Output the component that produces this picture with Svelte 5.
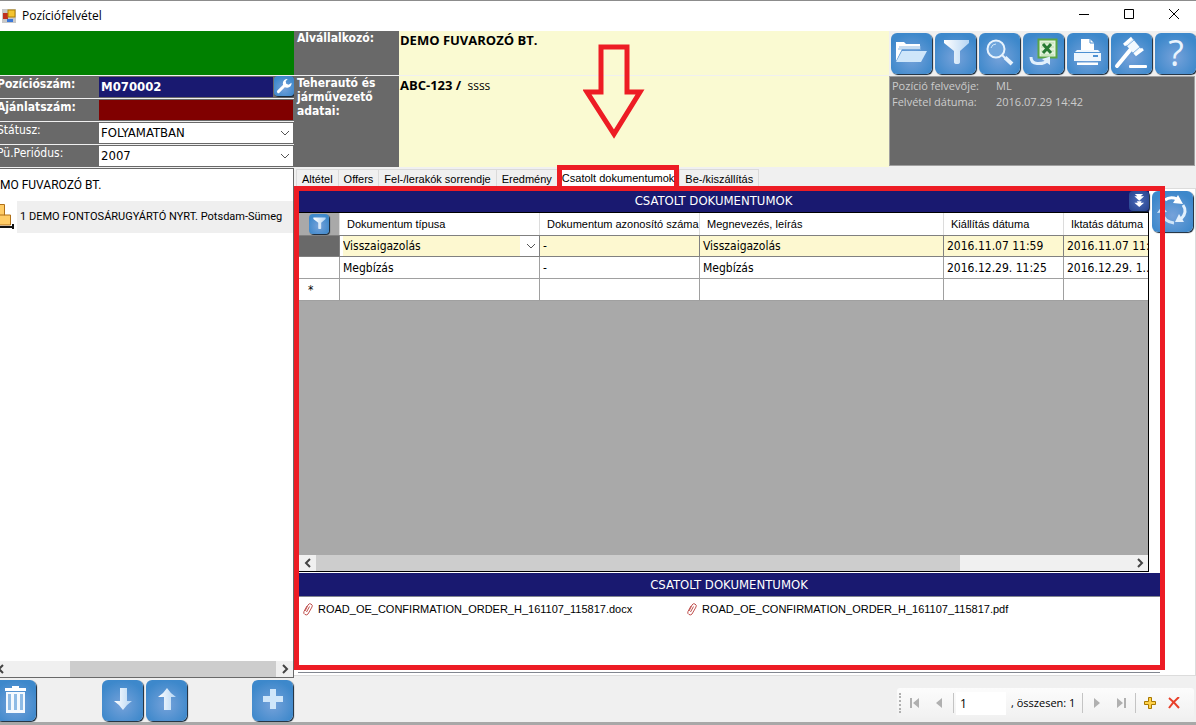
<script>
  const tools = [
    { icon: 'folder', label: 'Megnyitás' },
    { icon: 'filter', label: 'Szűrés' },
    { icon: 'search', label: 'Keresés' },
    { icon: 'excel', label: 'Excel export' },
    { icon: 'print', label: 'Nyomtatás' },
    { icon: 'gavel', label: 'Licit' },
    { icon: 'help', label: 'Súgó' }
  ];

  const tabs = ['Altétel', 'Offers', 'Fel-/lerakók sorrendje', 'Eredmény', 'Csatolt dokumentumok', 'Be-/kiszállítás'];
  let activeTab = 'Csatolt dokumentumok';

  const columns = [
    { title: 'Dokumentum típusa', width: 200 },
    { title: 'Dokumentum azonosító száma', width: 160 },
    { title: 'Megnevezés, leírás', width: 244 },
    { title: 'Kiállítás dátuma', width: 120 },
    { title: 'Iktatás dátuma', width: 120 }
  ];

  const rows = [
    ['Megbízás', '-', 'Megbízás', '2016.12.29. 11:25', '2016.12.29. 1...']
  ];

  const files = [
    'ROAD_OE_CONFIRMATION_ORDER_H_161107_115817.docx',
    'ROAD_OE_CONFIRMATION_ORDER_H_161107_115817.pdf'
  ];

  let page = '1';
</script>

{#snippet icon(name)}
  <svg class="icon" viewBox="0 0 41 41" aria-hidden="true">
    {#if name === 'folder'}
      <path d="M5 28V9H13L15 11H29V16H11Z" fill="#fff" />
      <path d="M8 14H30M7 16H30" stroke="#8db9e3" />
      <path d="M11 18H36L30 29H5Z" fill="#cfe6fa" />
    {:else if name === 'filter'}
      <path d="M9 7H34V10L25 18V29Q25 31 22 31Q19 31 19 29V18L9 10Z" fill="url(#shine)" />
    {:else if name === 'search'}
      <circle cx="17" cy="16" r="8.5" fill="#6fa5dc" stroke="#e8f3fd" stroke-width="2" />
      <path d="M12 15Q13 11 17 11" fill="none" stroke="#cfe6fa" />
      <path d="M23 22L26 25" stroke="#e8f3fd" stroke-width="2" />
      <path d="M26 24.500L33 31" stroke="#e8f3fd" stroke-width="4" />
    {:else if name === 'excel'}
      <rect x="15.500" y="6.500" width="18" height="18" fill="#e4f3dc" stroke="#5aa545" stroke-width="2" />
      <path d="M18 10H31M18 14H31M18 18H31M18 22H31" stroke="#b7dba8" />
      <path d="M20 11L28 20M28 11L20 20" stroke="#287a33" stroke-width="3" />
      <path d="M8 24Q8 30 14 30.500Q22 31 25 27" fill="none" stroke="#e2f0fc" stroke-width="3" />
      <path d="M19 26L27 23.500L27 32Z" fill="#e2f0fc" />
    {:else if name === 'print'}
      <path d="M14 6H23L27 10V17H14Z" fill="#fff" />
      <path d="M23 6V10H27" fill="none" stroke="#4c90d2" />
      <path d="M10 17H31L34 20V28H7V20Z" fill="#eef6fd" />
      <path d="M7 19.500H34" stroke="#4c90d2" />
      <path d="M26 23H31" stroke="#4c90d2" stroke-width="2" />
      <path d="M10 29.500H31V32H10Z" fill="#fff" />
    {:else if name === 'gavel'}
      <path d="M20 16L6 33" stroke="#fff" stroke-width="4" stroke-linecap="round" />
      <path d="M15 12L22 6L31 17L24 22Z" fill="#f1f8fe" />
      <path d="M13 12L21 5M24 22L32 16" stroke="#fff" stroke-width="3" />
      <path d="M16 13L23 7M22 20L29 14" stroke="#7fb1e2" />
      <rect x="18" y="32" width="18" height="3" rx="1" fill="#fff" />
    {:else if name === 'help'}
      <text x="21" y="33" text-anchor="middle" class="mark">?</text>
    {:else if name === 'trash'}
      <path d="M17 6H24V8H31V11H10V8H17Z" fill="#fff" />
      <path d="M11 12H30V33H11Z" fill="#f4f9fe" />
      <path d="M14.500 14V30M20.500 14V30M26.500 14V30" stroke="#8fbbe5" stroke-width="3" />
    {:else if name === 'down'}
      <path d="M18 8H25V21H30Q24 25 21 30Q18 25 12 21H18Z" fill="url(#shine)" />
    {:else if name === 'up'}
      <path d="M18 30H25V17H30Q24 13 21 8Q18 13 12 17H18Z" fill="url(#shine)" />
    {:else if name === 'plus'}
      <path d="M18 9H24V16H31V22H24V29H18V22H11V16H18Z" fill="#cfe6fa" />
    {:else if name === 'refresh'}
      <path d="M13 9Q18 5 25 8" fill="none" stroke="#fff" stroke-width="3" />
      <path d="M26 4L31 13L21 12Z" fill="#fff" />
      <path d="M31 14Q36 21 29 28" fill="none" stroke="#e3f0fc" stroke-width="3" />
      <path d="M32 31L23 31L27 23Z" fill="#e3f0fc" />
      <path d="M22 32Q12 31 10 21" fill="none" stroke="#cfe4f8" stroke-width="3" />
      <path d="M5 22L10 15L15 21Z" fill="#cfe4f8" />
    {:else if name === 'wrench'}
      <path d="M9 32L22 19" stroke="#fff" stroke-width="6" stroke-linecap="round" />
      <path d="M28 6A9 9 0 1 0 36 14L30 18L25 16L24 11Z" fill="#fff" />
    {:else if name === 'expand'}
      <path d="M12 6H29L24 11H31L21 20L11 11H17ZM16 21H26L24 24H31L21 33L11 24H18Z" fill="#fff" />
    {/if}
  </svg>
{/snippet}

{#snippet chevron(d)}
  <svg class="chevron" viewBox="0 0 10 10" aria-hidden="true"><path {d} /></svg>
{/snippet}

{#snippet scrollbar(start, size)}
  <div class="scrollbar">
    <button aria-label="Balra"><svg viewBox="0 0 10 10"><path d="M7 1L3 5L7 9" /></svg></button>
    <div class="track"><div class="thumb" style="margin-left: {start}%; width: {size}%"></div></div>
    <button aria-label="Jobbra"><svg viewBox="0 0 10 10"><path d="M3 1L7 5L3 9" /></svg></button>
  </div>
{/snippet}

<svg class="defs" aria-hidden="true">
  <linearGradient id="shine" x1="0" y1="0" x2="1" y2="0">
    <stop offset="0" stop-color="#fff" />
    <stop offset="1" stop-color="#b5d5f3" />
  </linearGradient>
</svg>

<div class="window">
  <header class="titlebar">
    <svg class="appicon" viewBox="0 0 14 14" aria-hidden="true">
      <rect width="14" height="14" fill="#c8c8c8" />
      <rect x="1" y="4" width="5" height="6" fill="#c03020" />
      <rect x="6" y="1" width="7" height="7" fill="#f4c430" stroke="#b08000" />
      <rect x="5" y="10" width="6" height="3" fill="#3c78d8" />
    </svg>
    <span class="title">Pozíciófelvétel</span>
    <button aria-label="Kis méret"><svg viewBox="0 0 12 12"><path d="M1 6.500H11" /></svg></button>
    <button aria-label="Teljes méret"><svg viewBox="0 0 12 12"><path d="M1.500 1.500H10.500V10.500H1.500Z" /></svg></button>
    <button aria-label="Bezárás"><svg viewBox="0 0 12 12"><path d="M1 1L11 11M11 1L1 11" /></svg></button>
  </header>

  <div class="body">
    <aside class="side">
      <div class="status"></div>
      <div class="field">
        <label class="strong" for="pos">Pozíciószám:</label>
        <input id="pos" class="navy" value="M070002" />
        <button class="blue small" aria-label="Beállítás">{@render icon('wrench')}</button>
      </div>
      <div class="field">
        <label class="strong" for="offer">Ajánlatszám:</label>
        <input id="offer" class="maroon" />
      </div>
      <div class="field">
        <label for="state">Státusz:</label>
        <div class="combo">
          <select id="state"><option>FOLYAMATBAN</option></select>
          {@render chevron('M1 3L5 7L9 3')}
        </div>
      </div>
      <div class="field">
        <label for="period">Pü.Periódus:</label>
        <div class="combo">
          <select id="period"><option>2007</option></select>
          {@render chevron('M1 3L5 7L9 3')}
        </div>
      </div>

      <div class="tree">
        <div class="root">MO FUVAROZÓ BT.</div>
        <div class="node">
          <svg viewBox="0 0 17 28" aria-hidden="true">
            <path d="M-5 1.500H4.500V12H10.500V22H-5ZM-5 12H5" fill="#ffcc66" stroke="#b07018" />
            <path d="M0 24H13M13 21V26" stroke="#111" stroke-width="2" />
          </svg>
          <span>1 DEMO FONTOSÁRUGYÁRTÓ NYRT. Potsdam-Sümeg</span>
        </div>
        <div class="treebar">{@render scrollbar(23, 77)}</div>
      </div>

      <div class="actions">
        <button class="blue" aria-label="Törlés">{@render icon('trash')}</button>
        <div class="movers">
          <button class="blue" aria-label="Le">{@render icon('down')}</button>
          <button class="blue" aria-label="Fel">{@render icon('up')}</button>
        </div>
        <button class="blue" aria-label="Új">{@render icon('plus')}</button>
      </div>
    </aside>

    <main>
      <section class="info">
        <div class="caption">Alvállalkozó:</div>
        <div class="value"><b>DEMO FUVAROZÓ BT.</b></div>
        <div class="tools">
          {#each tools as tool}
            <button class="blue" aria-label={tool.label}>{@render icon(tool.icon)}</button>
          {/each}
        </div>
        <div class="caption">Teherautó és járművezető adatai:</div>
        <div class="value"><b>ABC-123 /</b>&nbsp; <span>ssss</span></div>
        <dl>
          <dt>Pozíció felvevője:</dt><dd>ML</dd>
          <dt>Felvétel dátuma:</dt><dd>2016.07.29 14:42</dd>
        </dl>
        <svg class="pointer" viewBox="0 0 62 96" aria-hidden="true">
          <path d="M18 3H44V48H57L31 90L4 48H18Z" />
        </svg>
      </section>

      <nav class="tabs">
        {#each tabs as tab}
          <button class:active={tab === activeTab} on:click={() => activeTab = tab}>{tab}</button>
        {/each}
      </nav>

      <section class="page">
        <div class="upper">
          <div class="docs">
            <div class="bar">
              <h2>CSATOLT DOKUMENTUMOK</h2>
              <button class="blue small deep" aria-label="Kibontás">{@render icon('expand')}</button>
            </div>
            <div class="grid">
              <div class="sheet">
                <table>
                  <colgroup>
                    <col style="width: 41px" />
                    {#each columns as column}
                      <col style="width: {column.width}px" />
                    {/each}
                  </colgroup>
                  <thead>
                    <tr>
                      <th class="corner"><button class="blue small" aria-label="Szűrő">{@render icon('filter')}</button></th>
                      {#each columns as column}
                        <th>{column.title}</th>
                      {/each}
                    </tr>
                  </thead>
                  <tbody>
                    <tr class="current">
                      <td class="rowhead"></td>
                      <td class="editor">
                        <div class="combo">
                          <select aria-label="Dokumentum típusa"><option>Visszaigazolás</option></select>
                          {@render chevron('M1 3L5 7L9 3')}
                        </div>
                      </td>
                      <td>-</td>
                      <td>Visszaigazolás</td>
                      <td>2016.11.07 11:59</td>
                      <td>2016.11.07 11:59</td>
                    </tr>
                    {#each rows as row}
                      <tr>
                        <td class="rowhead"></td>
                        {#each row as cell}
                          <td>{cell}</td>
                        {/each}
                      </tr>
                    {/each}
                    <tr>
                      <td class="rowhead">*</td>
                      {#each columns as column}
                        <td></td>
                      {/each}
                    </tr>
                  </tbody>
                </table>
              </div>
              {@render scrollbar(0, 79)}
            </div>
          </div>
          <button class="blue" aria-label="Frissítés">{@render icon('refresh')}</button>
        </div>

        <div class="lower">
          <div class="bar"><h2>CSATOLT DOKUMENTUMOK</h2></div>
          <ul>
            {#each files as file}
              <li>
                <svg viewBox="0 0 12 14" aria-hidden="true">
                  <path d="M3 9L6 3Q7 1 9 2Q11 3 10 5L6 12Q5 13.500 3 12.500Q1 11.500 2 9.500L5 4M4.500 10L7.500 4.500" />
                </svg>
                <a href="#{file}">{file}</a>
              </li>
            {/each}
          </ul>
        </div>
        <div class="frame"></div>
      </section>

      <footer>
        <div class="navigator">
          <span class="grip"></span>
          <button aria-label="Első"><svg viewBox="0 0 12 12"><path d="M1 1H3V11H1ZM10 1V11L4 6Z" /></svg></button>
          <button aria-label="Előző"><svg viewBox="0 0 12 12"><path d="M9 1V11L3 6Z" /></svg></button>
          <span class="sep"></span>
          <input aria-label="Oldal" bind:value={page} />
          <span class="total">, összesen: 1</span>
          <span class="sep"></span>
          <button aria-label="Következő"><svg viewBox="0 0 12 12"><path d="M3 1V11L9 6Z" /></svg></button>
          <button aria-label="Utolsó"><svg viewBox="0 0 12 12"><path d="M9 1H11V11H9ZM2 1V11L8 6Z" /></svg></button>
          <span class="sep"></span>
          <button aria-label="Hozzáadás"><svg viewBox="0 0 12 12"><path class="add" d="M4.500 .5H7.500V4.500H11.500V7.500H7.500V11.500H4.500V7.500H.5V4.500H4.500Z" /></svg></button>
          <button aria-label="Eltávolítás"><svg viewBox="0 0 12 12"><path class="remove" d="M1 1Q6 5 11 11M11 0Q5 5 1 11" /></svg></button>
        </div>
      </footer>
    </main>
  </div>
</div>

<style>
:global(body) {
  margin: 0;
  background: #f0f0f0;
}

.window {
  --ui: "Liberation Sans", Arial, sans-serif;
  --tahoma: "DejaVu Sans Condensed", "DejaVu Sans", sans-serif;
  --segoe: "Open Sans", "Noto Sans", sans-serif;
  box-sizing: border-box;
  min-height: 100vh;
  display: flex;
  flex-direction: column;
  overflow: hidden;
  border-top: 1px solid #8c8c8c;
  border-bottom: 3px solid #a8a8a8;
  background: #f0f0f0;
  color: #000;
  font: 12px/16px var(--tahoma);
}

button, input, select {
  box-sizing: border-box;
  margin: 0;
  padding: 0;
  border: 0;
  border-radius: 0;
  background: none;
  color: inherit;
  font: inherit;
}

.defs {
  position: absolute;
  width: 0;
  height: 0;
}

/* Title bar */
.titlebar {
  display: flex;
  align-items: center;
  height: 30px;
  padding-left: 2px;
  background: #fff;
  font-family: var(--segoe);
}
.appicon {
  width: 14px;
  height: 14px;
  margin-right: 6px;
}
.title {
  flex: 1;
}
.titlebar button {
  width: 45px;
  height: 28px;
}
.titlebar button svg {
  width: 12px;
  height: 12px;
  fill: none;
  stroke: #000;
}

/* Blue icon buttons */
.blue {
  display: block;
  flex: none;
  width: 41px;
  height: 41px;
  border-radius: 6px;
  background: radial-gradient(circle at 50% 60%, #76a2da, #3d88cb 75%);
  box-shadow: 1px 1px 1px #123;
}
.blue.small {
  width: 20px;
  height: 20px;
  border-radius: 4px;
}
.blue.deep {
  background: radial-gradient(#4a6cb8, #25408c);
}
.icon {
  display: block;
  width: 100%;
  height: 100%;
}
.mark {
  font: 36px var(--segoe);
  fill: #eaf4fd;
}

.body {
  flex: 1;
  display: flex;
}

/* Left panel */
.side {
  flex: none;
  width: 294px;
  display: flex;
  flex-direction: column;
}
.status {
  height: 44px;
  margin-bottom: 1px;
  background: #008000;
}
.field {
  display: flex;
  height: 22px;
  margin-bottom: 1px;
  background: #696969;
}
.field label {
  width: 99px;
  text-indent: -3px;
  color: #fff;
}
.strong {
  font-weight: bold;
}
.field input,
.field .combo {
  flex: 1;
  min-width: 0;
  margin: 1px 1px 1px 0;
  font-size: 13px;
}
.field input {
  padding: 0 2px;
  color: #fff;
  font-weight: bold;
}
.navy {
  background: #191970;
}
.maroon {
  background: #800000;
}
.combo {
  display: grid;
  align-items: center;
  background: #fff;
}
.combo select {
  grid-area: 1 / 1;
  width: 100%;
  height: 100%;
  padding-left: 2px;
  appearance: none;
}
.chevron {
  grid-area: 1 / 1;
  justify-self: end;
  width: 10px;
  height: 10px;
  margin-right: 3px;
  fill: none;
  stroke: #555;
  pointer-events: none;
}

.tree {
  flex: 1;
  display: flex;
  flex-direction: column;
  overflow: hidden;
  border: solid #696969;
  border-width: 1px 1px 1px 0;
  background: #fff;
  font: 12px/16px Roboto, sans-serif;
}
.root {
  padding: 8px 0;
}
.node {
  display: flex;
  align-items: center;
  height: 32px;
  background: #efefef;
  white-space: nowrap;
  overflow: hidden;
  font-size: 11px;
}
.node svg {
  flex: none;
  width: 17px;
  height: 32px;
  background: #fff;
}
.node span {
  padding-left: 3px;
}
.treebar {
  margin: auto 0 0 -8px;
}

.scrollbar {
  display: flex;
  height: 16px;
  background: #f0f0f0;
}
.scrollbar button {
  width: 17px;
}
.scrollbar svg {
  display: block;
  width: 10px;
  height: 10px;
  margin: auto;
  fill: none;
  stroke: #444;
  stroke-width: 2;
}
.track {
  flex: 1;
}
.thumb {
  height: 100%;
  background: #cdcdcd;
}

.actions {
  display: flex;
  justify-content: space-between;
  height: 42px;
  padding: 2px 1px 0 0;
  margin-left: -5px;
}
.movers {
  display: flex;
  gap: 3px;
}

/* Header of the right side */
main {
  flex: 1;
  min-width: 0;
  display: flex;
  flex-direction: column;
}
.info {
  position: relative;
  display: grid;
  grid-template-columns: 105px 1fr 307px;
  grid-template-rows: 44px 91px;
  row-gap: 1px;
}
.caption {
  padding-left: 3px;
  background: #696969;
  color: #fff;
  font-weight: bold;
  line-height: 14px;
}
.value {
  padding: 1px;
  background: #fafad2;
  font-family: var(--segoe);
}
.value b {
  font-size: 13px;
}
.tools {
  display: flex;
  gap: 3px;
  padding: 2px 0 0 2px;
}
.info dl {
  display: grid;
  grid-template-columns: 104px 1fr;
  align-content: start;
  margin: 0 1px 1px 0;
  padding: 1px 0 0 2px;
  border: 1px solid #a0a0a0;
  background: #696969;
  color: #ccc;
  font: 11px/16px var(--segoe);
}
.info dd {
  margin: 0;
}
.pointer {
  position: absolute;
  left: 289px;
  top: 13px;
  width: 62px;
  height: 96px;
  fill: none;
  stroke: #ed1c24;
  stroke-width: 5;
}

/* Tabs */
.tabs {
  display: flex;
  align-items: flex-end;
  height: 21px;
  padding-left: 2px;
  font: 11px/16px var(--ui);
}
.tabs button {
  height: 19px;
  padding: 0 5px;
  border: solid #dadada;
  border-width: 1px 0 0 1px;
  white-space: nowrap;
}
.tabs button:last-child {
  border-right-width: 1px;
}
.tabs .active {
  position: relative;
  z-index: 2;
  height: 26px;
  margin-bottom: -3px;
  padding: 0 0 2px;
  border: 5px solid #ed1c24;
  background: #fff;
}

/* Tab page */
.page {
  position: relative;
  flex: 1;
  display: flex;
  flex-direction: column;
  box-sizing: border-box;
  padding: 2px 2px 2px 4px;
  border: solid #dcdcdc;
  border-width: 1px 1px 1px 0;
  background: #fff;
}
.frame {
  position: absolute;
  inset: -3px 30px 5px 0;
  border: 5px solid #ed1c24;
  pointer-events: none;
}
.upper {
  flex: 1;
  display: flex;
  gap: 3px;
}
.docs {
  flex: 1;
  min-width: 0;
  display: flex;
  flex-direction: column;
}
.bar {
  display: flex;
  height: 21px;
  background: #191970;
  color: #fff;
}
h2 {
  flex: 1;
  margin: 0;
  text-align: center;
  font: 13px/20px var(--tahoma);
}
.grid {
  flex: 1;
  display: flex;
  flex-direction: column;
  border: 1px solid #000;
  background: #a9a9a9;
}
.sheet {
  flex: 1;
  overflow: hidden;
}
table {
  table-layout: fixed;
  width: 885px;
  border-collapse: separate;
  border-spacing: 0;
}
th {
  box-sizing: border-box;
  height: 22px;
  padding: 0 0 0 7px;
  border-right: 1px solid #dcdcdc;
  background: #fff;
  text-align: left;
  white-space: nowrap;
  font: 11px/16px var(--ui);
}
th.corner {
  padding: 0 0 0 10px;
  background: #a9a9a9;
}
td {
  box-sizing: border-box;
  height: 22px;
  padding: 0 3px;
  border: solid #a0a0a0;
  border-width: 0 1px 1px 0;
  background: #fff;
  white-space: nowrap;
  overflow: hidden;
}
.current td {
  border-top: 1px solid #808080;
  border-color: #808080;
  background: #fdf8d0;
}
.rowhead {
  text-indent: 6px;
}
.current .rowhead {
  background: #696969;
}
.current .editor {
  padding: 0;
}
.editor .combo {
  height: 20px;
}
.editor select {
  padding-left: 3px;
  background: linear-gradient(#fdf8d0, #fdf8d0) no-repeat 3px 0 / 177px 100%;
}

.lower {
  margin: 1px 33px 0 0;
  height: 99px;
  border-bottom: 1px solid #828790;
}
.lower .bar {
  height: 23px;
  border-bottom: 1px solid #828790;
}
.lower h2 {
  line-height: 23px;
}
ul {
  display: flex;
  margin: 0;
  padding: 4px;
  list-style: none;
  font: 11px/16px var(--ui);
}
li {
  display: flex;
  align-items: center;
  width: 384px;
  gap: 4px;
}
li svg {
  width: 12px;
  height: 14px;
  fill: none;
  stroke: #c0504d;
}
li a {
  color: #000;
  text-decoration: none;
}

/* Record navigator */
footer {
  display: flex;
  justify-content: flex-end;
  padding: 12px 2px 4px 0;
}
.navigator {
  display: flex;
  align-items: center;
  width: 297px;
  height: 30px;
  border-radius: 3px;
  background: linear-gradient(#fcfcfc, #f1f1f1);
  font-family: var(--segoe);
}
.grip {
  height: 20px;
  margin: 0 2px;
  border-left: 2px dotted #b0b0b0;
}
.navigator button {
  flex: none;
  width: 24px;
  height: 22px;
}
.navigator button svg {
  display: block;
  width: 12px;
  height: 12px;
  margin: auto;
  fill: #b0b0b0;
}
.navigator .add {
  fill: #ffd24a;
  stroke: #a87800;
}
.navigator .remove {
  fill: none;
  stroke: #e8402a;
  stroke-width: 2;
}
.sep {
  flex: none;
  width: 1px;
  height: 20px;
  margin: 0 2px;
  background: #c4c4c4;
}
.navigator input {
  flex: none;
  width: 50px;
  height: 23px;
  padding: 0 4px;
  background: #fff;
}
.total {
  padding: 0 5px;
  white-space: nowrap;
  font-size: 11px;
}
</style>
